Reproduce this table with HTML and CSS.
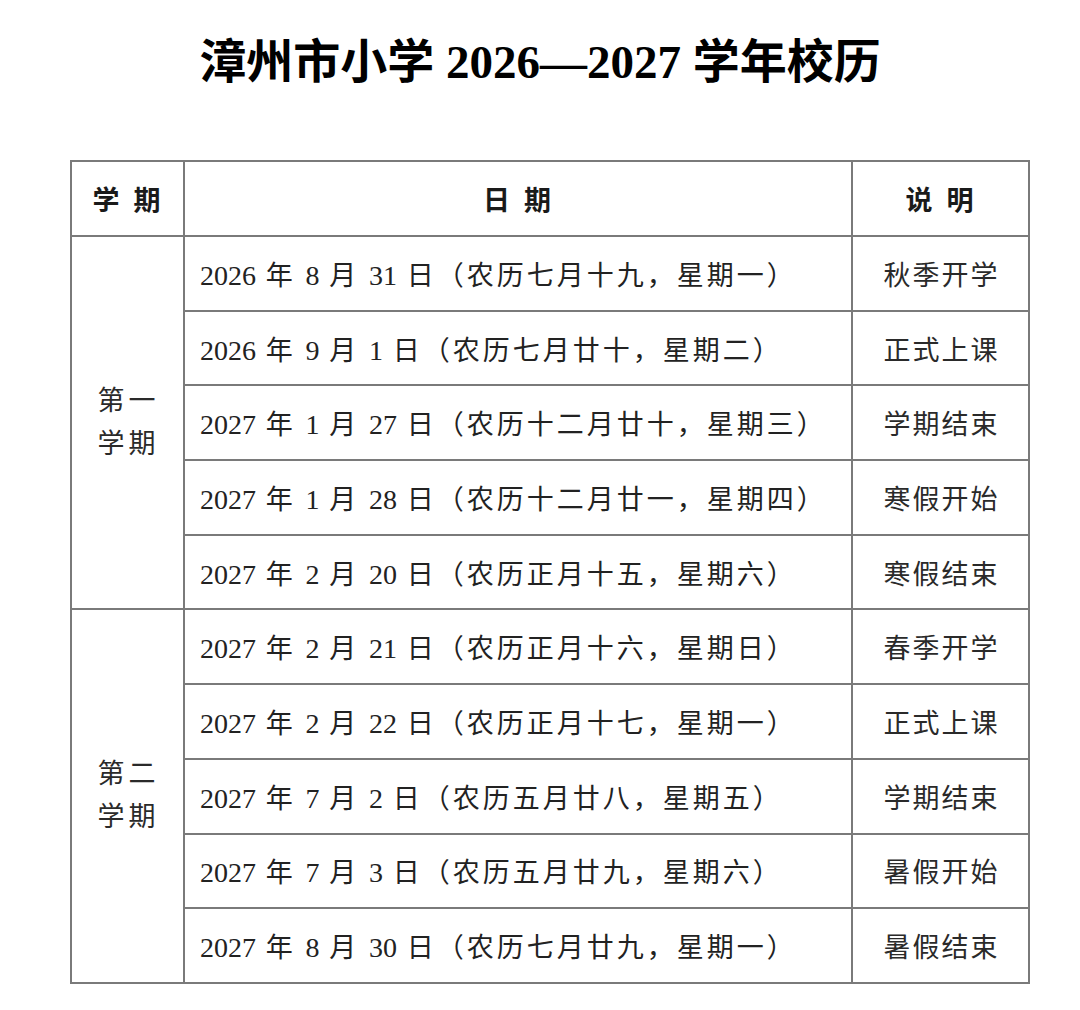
FILE: index.html
```html
<!DOCTYPE html>
<html lang="zh-CN">
<head>
<meta charset="utf-8">
<title>漳州市小学 2026—2027 学年校历</title>
<link rel="stylesheet" href="styles.css">
</head>
<body>
<div class="page">
  <h1 class="title">漳州市小学 2026—2027 学年校历</h1>
  <table class="calendar">
    <colgroup>
      <col class="col-term">
      <col class="col-date">
      <col class="col-note">
    </colgroup>
    <thead>
      <tr class="head-row">
        <th class="head">学期</th>
        <th class="head">日期</th>
        <th class="head">说明</th>
      </tr>
    </thead>
    <tbody>
      <tr class="row">
        <td class="term" rowspan="5">第一<br>学期</td>
        <td class="date"><span class="num">2026</span> 年 <span class="num">8</span> 月 <span class="num">31</span> 日（农历七月十九，星期一）</td>
        <td class="note">秋季开学</td>
      </tr>
      <tr class="row">
        <td class="date"><span class="num">2026</span> 年 <span class="num">9</span> 月 <span class="num">1</span> 日（农历七月廿十，星期二）</td>
        <td class="note">正式上课</td>
      </tr>
      <tr class="row">
        <td class="date"><span class="num">2027</span> 年 <span class="num">1</span> 月 <span class="num">27</span> 日（农历十二月廿十，星期三）</td>
        <td class="note">学期结束</td>
      </tr>
      <tr class="row">
        <td class="date"><span class="num">2027</span> 年 <span class="num">1</span> 月 <span class="num">28</span> 日（农历十二月廿一，星期四）</td>
        <td class="note">寒假开始</td>
      </tr>
      <tr class="row">
        <td class="date"><span class="num">2027</span> 年 <span class="num">2</span> 月 <span class="num">20</span> 日（农历正月十五，星期六）</td>
        <td class="note">寒假结束</td>
      </tr>
      <tr class="row">
        <td class="term" rowspan="5">第二<br>学期</td>
        <td class="date"><span class="num">2027</span> 年 <span class="num">2</span> 月 <span class="num">21</span> 日（农历正月十六，星期日）</td>
        <td class="note">春季开学</td>
      </tr>
      <tr class="row">
        <td class="date"><span class="num">2027</span> 年 <span class="num">2</span> 月 <span class="num">22</span> 日（农历正月十七，星期一）</td>
        <td class="note">正式上课</td>
      </tr>
      <tr class="row">
        <td class="date"><span class="num">2027</span> 年 <span class="num">7</span> 月 <span class="num">2</span> 日（农历五月廿八，星期五）</td>
        <td class="note">学期结束</td>
      </tr>
      <tr class="row">
        <td class="date"><span class="num">2027</span> 年 <span class="num">7</span> 月 <span class="num">3</span> 日（农历五月廿九，星期六）</td>
        <td class="note">暑假开始</td>
      </tr>
      <tr class="row">
        <td class="date"><span class="num">2027</span> 年 <span class="num">8</span> 月 <span class="num">30</span> 日（农历七月廿九，星期一）</td>
        <td class="note">暑假结束</td>
      </tr>
    </tbody>
  </table>
</div>
</body>
</html>
```
FILE: styles.css
```css
html, body {
  margin: 0;
  padding: 0;
  background: #ffffff;
}

.page {
  padding-top: 34px;
}

.title {
  margin: 0;
  text-align: center;
  font-family: "Liberation Serif", "Noto Sans CJK SC", serif;
  font-weight: 700;
  font-size: 47px;
  line-height: 56px;
  color: #000000;
}

.calendar {
  margin: 70px 0 0 70px;
  width: 958px;
  border-collapse: collapse;
  table-layout: fixed;
  font-family: "Liberation Serif", "Noto Sans CJK SC", serif;
  color: #222222;
}

.col-term { width: 113px; }
.col-date { width: 668px; }
.col-note { width: 177px; }

.calendar th,
.calendar td {
  border: 2px solid #7a7a7a;
  padding: 0;
}

.head-row {
  height: 75px;
}

.calendar .head {
  font-size: 27px;
  font-weight: 700;
  letter-spacing: 14px;
  padding-left: 12px;
  text-align: center;
  vertical-align: middle;
  color: #1a1a1a;
}

.row {
  height: 74.7px;
}

.calendar .term {
  font-size: 27px;
  font-weight: 400;
  line-height: 43px;
  letter-spacing: 4px;
  padding-left: 2px;
  text-align: center;
  vertical-align: middle;
  color: #2a2a2a;
}

.calendar .date {
  font-size: 27px;
  font-weight: 400;
  letter-spacing: 3px;
  padding-left: 15px;
  text-align: left;
  vertical-align: middle;
  white-space: nowrap;
}

.num {
  font-size: 28px;
  letter-spacing: 0;
}

.calendar .note {
  font-size: 27px;
  font-weight: 400;
  letter-spacing: 2px;
  padding-left: 2px;
  text-align: center;
  vertical-align: middle;
  color: #2a2a2a;
}
```
